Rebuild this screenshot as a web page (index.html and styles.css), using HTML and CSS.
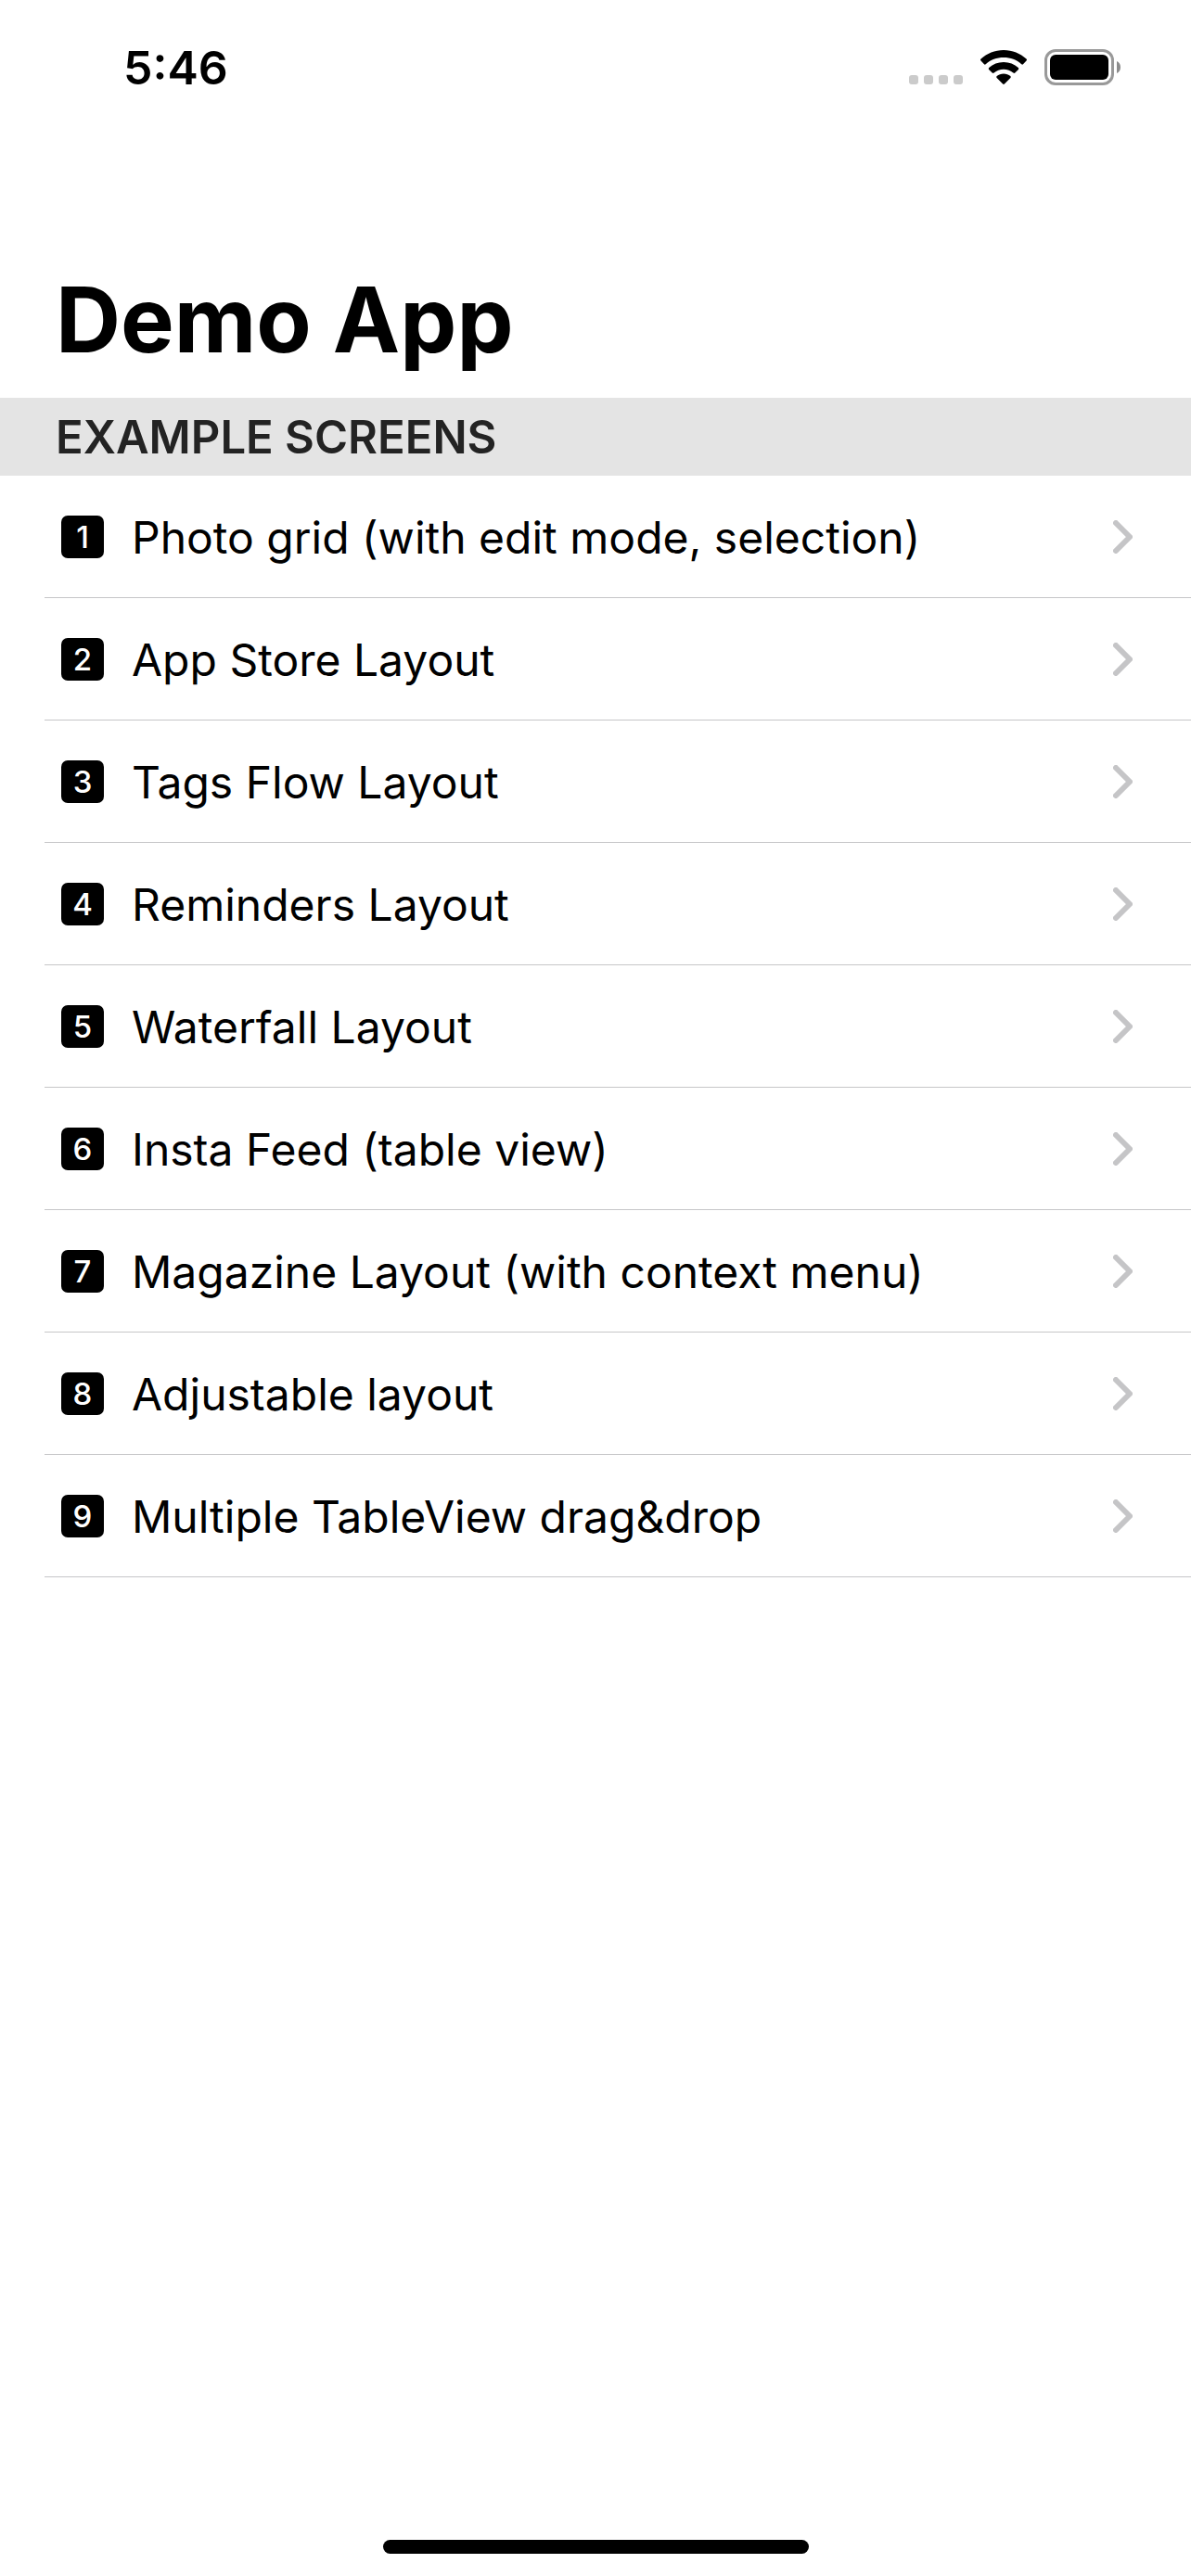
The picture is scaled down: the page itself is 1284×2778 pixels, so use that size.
FILE: index.html
```html
<!DOCTYPE html>
<html lang="en">
<head>
<meta charset="utf-8">
<meta name="viewport" content="width=device-width, initial-scale=1">
<title>Demo App</title>
<link rel="stylesheet" href="styles.css">
</head>
<body>
<header class="status-bar">
  <time class="clock">5:46</time>
  <div class="indicators">
    <svg class="signal" viewBox="0 0 58 11" role="img" aria-label="No cellular signal">
      <rect x="0" width="10" height="10" rx="3"/>
      <rect x="16" width="10" height="10" rx="3"/>
      <rect x="32" width="10" height="10" rx="3"/>
      <rect x="48" width="10" height="10" rx="3"/>
    </svg>
    <svg class="wifi" viewBox="0 0 50 38" role="img" aria-label="Wi-Fi">
      <path d="M25 0C34.500 0 43 3.600 49.500 9.500Q50.500 10.500 49.500 11.500L46 15.300Q45.200 16 44.300 15.200C39 10.400 32.500 8 25 8S11 10.400 5.700 15.200Q4.800 16 4 15.300L.500 11.500Q-.500 10.500 .500 9.500C7 3.600 15.500 0 25 0Z"/>
      <path d="M25 13C31.200 13 36.500 15.200 40.800 19Q41.800 20 40.900 20.900L37.300 24.500Q36.400 25.300 35.400 24.500C32.500 22.200 29 20.800 25 20.800S17.500 22.200 14.600 24.500Q13.600 25.300 12.700 24.500L9.100 20.900Q8.200 20 9.200 19C13.500 15.200 18.800 13 25 13Z"/>
      <path d="M25 25.600C27.900 25.600 30.300 26.600 32.300 28.100Q33.300 29 32.400 29.900L25.900 36.600Q25 37.500 24.100 36.600L17.600 29.900Q16.700 29 17.700 28.100C19.700 26.600 22.100 25.600 25 25.600Z"/>
    </svg>
    <svg class="battery" viewBox="0 0 82 39" role="img" aria-label="Battery full">
      <rect class="battery-case" x="1.500" y="1.500" width="72" height="36" rx="10.500"/>
      <rect x="6" y="6" width="63" height="27" rx="6"/>
      <path class="battery-tip" d="M78 13C80.500 14 82 16.500 82 19.500S80.500 25 78 26Z"/>
    </svg>
  </div>
</header>
<main class="screen">
  <h1 class="title">Demo App</h1>
  <h2 class="section-title">EXAMPLE SCREENS</h2>
  <ul class="menu">
    <li class="menu-item"><a class="menu-link" href="#photo-grid"><span class="badge">1</span><span class="label">Photo grid (with edit mode, selection)</span><svg class="chevron" viewBox="0 0 21 36" aria-hidden="true"><path d="M3 3L18 18L3 33"/></svg></a></li>
    <li class="menu-item"><a class="menu-link" href="#app-store"><span class="badge">2</span><span class="label">App Store Layout</span><svg class="chevron" viewBox="0 0 21 36" aria-hidden="true"><path d="M3 3L18 18L3 33"/></svg></a></li>
    <li class="menu-item"><a class="menu-link" href="#tags-flow"><span class="badge">3</span><span class="label">Tags Flow Layout</span><svg class="chevron" viewBox="0 0 21 36" aria-hidden="true"><path d="M3 3L18 18L3 33"/></svg></a></li>
    <li class="menu-item"><a class="menu-link" href="#reminders"><span class="badge">4</span><span class="label">Reminders Layout</span><svg class="chevron" viewBox="0 0 21 36" aria-hidden="true"><path d="M3 3L18 18L3 33"/></svg></a></li>
    <li class="menu-item"><a class="menu-link" href="#waterfall"><span class="badge">5</span><span class="label">Waterfall Layout</span><svg class="chevron" viewBox="0 0 21 36" aria-hidden="true"><path d="M3 3L18 18L3 33"/></svg></a></li>
    <li class="menu-item"><a class="menu-link" href="#insta-feed"><span class="badge">6</span><span class="label">Insta Feed (table view)</span><svg class="chevron" viewBox="0 0 21 36" aria-hidden="true"><path d="M3 3L18 18L3 33"/></svg></a></li>
    <li class="menu-item"><a class="menu-link" href="#magazine"><span class="badge">7</span><span class="label">Magazine Layout (with context menu)</span><svg class="chevron" viewBox="0 0 21 36" aria-hidden="true"><path d="M3 3L18 18L3 33"/></svg></a></li>
    <li class="menu-item"><a class="menu-link" href="#adjustable"><span class="badge">8</span><span class="label">Adjustable layout</span><svg class="chevron" viewBox="0 0 21 36" aria-hidden="true"><path d="M3 3L18 18L3 33"/></svg></a></li>
    <li class="menu-item"><a class="menu-link" href="#drag-drop"><span class="badge">9</span><span class="label">Multiple TableView drag&amp;drop</span><svg class="chevron" viewBox="0 0 21 36" aria-hidden="true"><path d="M3 3L18 18L3 33"/></svg></a></li>
  </ul>
</main>
<footer class="home-area"><div class="home-indicator"></div></footer>
</body>
</html>
```
FILE: styles.css
```css
* {
  box-sizing: border-box;
}

body {
  margin: 0;
  min-height: 100vh;
  display: flex;
  flex-direction: column;
  background: #fff;
  color: #000;
  font-family: Inter, "Liberation Sans", sans-serif;
}

.status-bar {
  display: flex;
  justify-content: space-between;
  align-items: center;
  height: 145px;
  padding: 0 76px 0 133px;
}

.clock {
  font-size: 50px;
  line-height: 60px;
  font-weight: 600;
}

.indicators {
  display: flex;
  align-items: flex-end;
  gap: 19px;
}

.signal {
  width: 58px;
  height: 11px;
  fill: #cbcbcb;
}

.wifi {
  width: 50px;
  height: 38px;
}

.battery {
  width: 82px;
  height: 39px;
}

.battery-case {
  fill: none;
  stroke: #999;
  stroke-width: 3;
}

.battery-tip {
  fill: #8c8c8c;
}

.title {
  margin: 0;
  padding: 140px 60px 24px;
  font-size: 97px;
  line-height: 120px;
  font-weight: 700;
}

.section-title {
  margin: 0;
  padding: 13px 60px 11px;
  background: #e4e4e4;
  color: #232323;
  font-size: 49px;
  line-height: 60px;
  font-weight: 600;
}

.menu {
  margin: 0;
  padding: 0 0 0 48px;
  list-style: none;
}

.menu-item {
  border-bottom: 1px solid #c6c6c8;
}

.menu-link {
  display: flex;
  align-items: center;
  min-height: 131px;
  padding: 0 63px 0 18px;
  color: inherit;
  text-decoration: none;
}

.badge {
  flex: none;
  width: 46px;
  height: 46px;
  margin-right: 30px;
  border-radius: 7px;
  background: #000;
  color: #fff;
  font-size: 33px;
  line-height: 46px;
  font-weight: 500;
  text-align: center;
}

.label {
  flex: 1;
  padding-top: 2px;
  font-size: 48px;
  line-height: 60px;
}

.chevron {
  flex: none;
  width: 21px;
  height: 36px;
  fill: none;
  stroke: #c5c5c7;
  stroke-width: 6;
  stroke-linecap: round;
  stroke-linejoin: round;
}

.home-area {
  display: flex;
  justify-content: center;
  margin-top: auto;
  padding: 24px 0;
}

.home-indicator {
  width: 36%;
  max-width: 459px;
  height: 15px;
  border-radius: 8px;
  background: #000;
}
```
